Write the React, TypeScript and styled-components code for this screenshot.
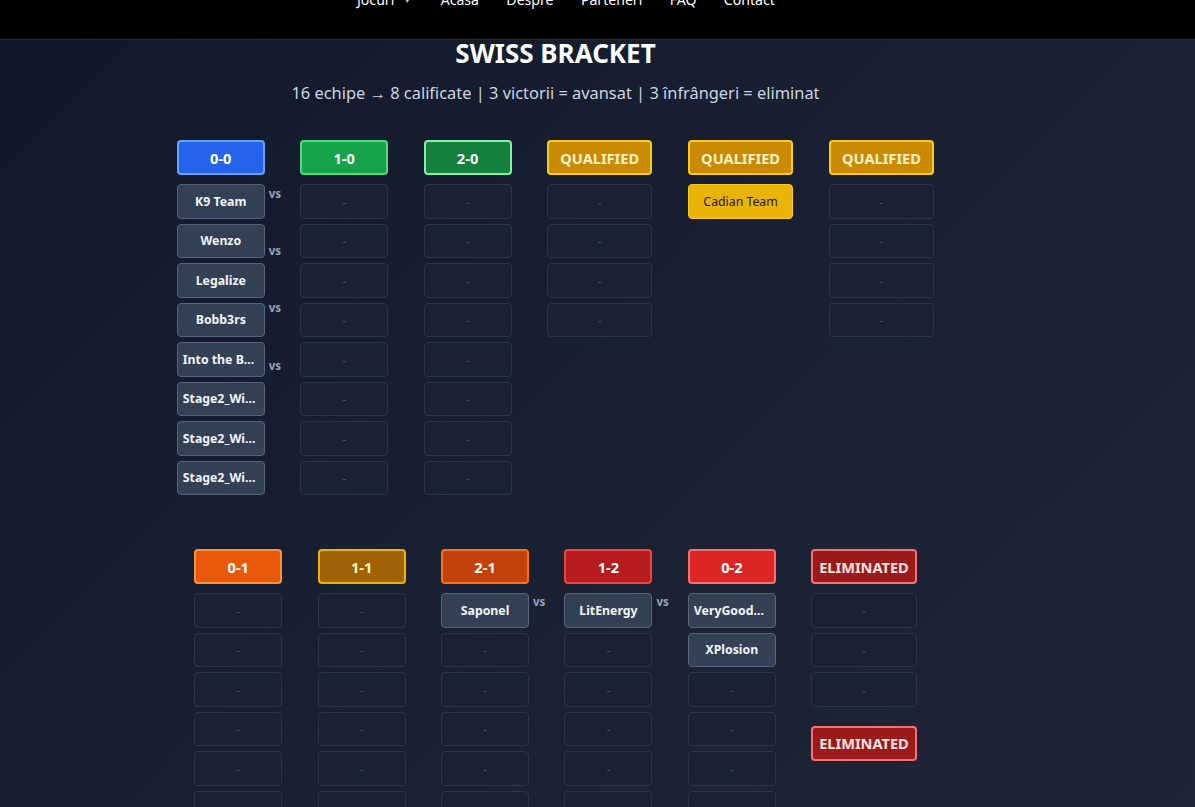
import React from "react";
import styled, { createGlobalStyle } from "styled-components";

const Global = createGlobalStyle`
  html, body { margin: 0; padding: 0; overflow: hidden; }
  body {
    background: linear-gradient(135deg, #121829 0%, #1a2234 60%, #1e2638 100%);
    font-family: "Noto Sans", "Open Sans", sans-serif;
    color: #fff;
    min-height: 100vh;
  }
`;

const Nav = styled.nav`
  height: 39px;
  background: #000;
  border-bottom: 1px solid #2c2740;
  overflow: hidden;
`;

const NavList = styled.ul`
  list-style: none;
  margin: -10px 0 0 0;
  padding: 0 0 0 357px;
  display: flex;
  gap: 27.4px;
  font-size: 14.1px;
  line-height: 20px;
`;

const NavItem = styled.li`
  color: #fff;
  display: flex;
  align-items: center;
  gap: 9px;
`;

const Caret = styled.span`
  font-size: 8px;
  color: #ccc;
  margin-right: 2px;
`;

const Page = styled.main`
  width: 1111px;
  display: flex;
  flex-direction: column;
  align-items: center;
`;

const Title = styled.h1`
  margin: 0;
  font-size: 26px;
  line-height: 26px;
  font-weight: 700;
  color: #fff;
`;

const Subtitle = styled.p`
  margin: 17px 0 0;
  font-size: 16.4px;
  line-height: 20px;
  color: #cbd5e1;
`;

const Bracket = styled.div<{ $top: number }>`
  display: flex;
  gap: 35.4px;
  margin-top: ${(p) => p.$top}px;
  align-items: flex-start;
`;

const Column = styled.div<{ $wide?: boolean }>`
  width: ${(p) => (p.$wide ? 105.5 : 88)}px;
  display: flex;
  flex-direction: column;
  position: relative;
`;

type Tone = {
  bg: string;
  border: string;
  color: string;
};

const tones: Record<string, Tone> = {
  blue: { bg: "#2563eb", border: "#60a5fa", color: "#fff" },
  green: { bg: "#16a34a", border: "#4ade80", color: "#fff" },
  darkgreen: { bg: "#15803d", border: "#86efac", color: "#fff" },
  gold: { bg: "#ca8a04", border: "#facc15", color: "#fef3c7" },
  orange: { bg: "#ea580c", border: "#fb923c", color: "#fff" },
  amber: { bg: "#a16207", border: "#eab308", color: "#fef9c3" },
  rust: { bg: "#c2410c", border: "#f97316", color: "#fff" },
  red: { bg: "#b91c1c", border: "#ef4444", color: "#fff" },
  brightred: { bg: "#dc2626", border: "#f87171", color: "#fff" },
  maroon: { bg: "#991b1b", border: "#f87171", color: "#fee2e2" },
};

const Header = styled.div<{ $tone: Tone; $gap?: number }>`
  box-sizing: border-box;
  height: 35px;
  margin-top: ${(p) => p.$gap ?? 0}px;
  border-radius: 4px;
  border: 2px solid ${(p) => p.$tone.border};
  background: ${(p) => p.$tone.bg};
  color: ${(p) => p.$tone.color};
  font-weight: 700;
  font-size: 14.6px;
  display: flex;
  align-items: center;
  justify-content: center;
  white-space: nowrap;
`;

const CardList = styled.div`
  margin-top: 9px;
  display: flex;
  flex-direction: column;
  gap: 5px;
`;

const Card = styled.div<{ $kind: "empty" | "team" | "qualified" }>`
  box-sizing: border-box;
  height: 34.5px;
  border-radius: 4px;
  padding: 0 5px;
  display: flex;
  align-items: center;
  justify-content: center;
  font-size: ${(p) => (p.$kind === "empty" ? "11px" : "12.3px")};
  font-weight: ${(p) => (p.$kind === "team" ? 700 : 400)};
  border: 1px solid
    ${(p) =>
      p.$kind === "team" ? "#56657b" : p.$kind === "qualified" ? "#facc15" : "#2c3648"};
  background: ${(p) =>
    p.$kind === "team" ? "#334155" : p.$kind === "qualified" ? "#eab308" : "#1a2233"};
  color: ${(p) =>
    p.$kind === "team" ? "#f1f5f9" : p.$kind === "qualified" ? "#1c1917" : "#4b5566"};
`;

const CardText = styled.span`
  display: block;
  max-width: 100%;
  overflow: hidden;
  white-space: nowrap;
  text-overflow: ellipsis;
`;

const Vs = styled.span<{ $y: number }>`
  position: absolute;
  left: calc(100% + 4px);
  top: ${(p) => p.$y}px;
  font-size: 11.5px;
  font-weight: 700;
  color: #94a3b8;
  line-height: 14px;
`;

type Col = {
  label: string;
  tone: string;
  wide?: boolean;
  cards: { kind: "empty" | "team" | "qualified"; text?: string }[];
  vs?: number[];
  extraHeader?: { label: string; tone: string; gap: number };
};

const empty = (n: number) => Array.from({ length: n }, () => ({ kind: "empty" as const }));
const team = (t: string) => ({ kind: "team" as const, text: t });

const topCols: Col[] = [
  {
    label: "0-0",
    tone: "blue",
    cards: [
      team("K9 Team"),
      team("Wenzo"),
      team("Legalize"),
      team("Bobb3rs"),
      team("Into the Beyond"),
      team("Stage2_Winner1"),
      team("Stage2_Winner2"),
      team("Stage2_Winner3"),
    ],
    vs: [47, 104, 161, 219],
  },
  { label: "1-0", tone: "green", cards: empty(8) },
  { label: "2-0", tone: "darkgreen", cards: empty(8) },
  { label: "QUALIFIED", tone: "gold", wide: true, cards: empty(4) },
  { label: "QUALIFIED", tone: "gold", wide: true, cards: [{ kind: "qualified", text: "Cadian Team" }] },
  { label: "QUALIFIED", tone: "gold", wide: true, cards: empty(4) },
];

const bottomCols: Col[] = [
  { label: "0-1", tone: "orange", cards: empty(8) },
  { label: "1-1", tone: "amber", cards: empty(8) },
  { label: "2-1", tone: "rust", cards: [team("Saponel"), ...empty(7)], vs: [46] },
  { label: "1-2", tone: "red", cards: [team("LitEnergy"), ...empty(7)], vs: [46] },
  { label: "0-2", tone: "brightred", cards: [team("VeryGoodTeam"), team("XPlosion"), ...empty(6)] },
  {
    label: "ELIMINATED",
    tone: "maroon",
    wide: true,
    cards: empty(3),
    extraHeader: { label: "ELIMINATED", tone: "maroon", gap: 19 },
  },
];

const BracketColumn: React.FC<{ col: Col }> = ({ col }) => (
  <Column $wide={col.wide}>
    <Header $tone={tones[col.tone]}>{col.label}</Header>
    <CardList>
      {col.cards.map((c, i) => (
        <Card key={i} $kind={c.kind}>
          <CardText>{c.kind === "empty" ? "-" : c.text}</CardText>
        </Card>
      ))}
    </CardList>
    {col.extraHeader && (
      <Header $tone={tones[col.extraHeader.tone]} $gap={col.extraHeader.gap}>
        {col.extraHeader.label}
      </Header>
    )}
    {col.vs?.map((y, i) => (
      <Vs key={i} $y={y}>
        vs
      </Vs>
    ))}
  </Column>
);

export default function App() {
  return (
    <>
      <Global />
      <Nav>
        <NavList>
          <NavItem>
            Jocuri <Caret>▼</Caret>
          </NavItem>
          <NavItem>Acasa</NavItem>
          <NavItem>Despre</NavItem>
          <NavItem>Parteneri</NavItem>
          <NavItem>FAQ</NavItem>
          <NavItem>Contact</NavItem>
        </NavList>
      </Nav>
      <Page>
        <Title>SWISS BRACKET</Title>
        <Subtitle>16 echipe → 8 calificate | 3 victorii = avansat | 3 înfrângeri = eliminat</Subtitle>
        <Bracket $top={37}>
          {topCols.map((c, i) => (
            <BracketColumn key={i} col={c} />
          ))}
        </Bracket>
        <Bracket $top={54}>
          {bottomCols.map((c, i) => (
            <BracketColumn key={i} col={c} />
          ))}
        </Bracket>
      </Page>
    </>
  );
}
